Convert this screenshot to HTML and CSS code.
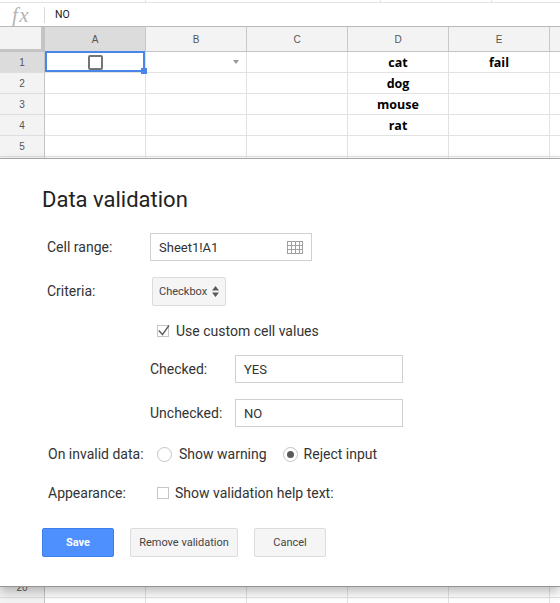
FILE: index.html
```html
<!DOCTYPE html>
<html lang="en">
<head>
<meta charset="utf-8">
<title>Data validation</title>
<link rel="stylesheet" href="styles.css">
</head>
<body>
<div class="app">
  <div class="toolbar-edge">
    <span class="tb-seg tb-seg-1"></span>
    <span class="tb-seg tb-seg-2"></span>
    <span class="tb-seg tb-seg-3"></span>
  </div>
  <div class="formula-bar">
    <span class="fx">fx</span>
    <span class="fx-sep"></span>
    <span class="fx-value">NO</span>
  </div>
  <div class="sheet">
    <div class="row row-head">
      <div class="hcell corner"></div>
      <div class="hcell sel">A</div>
      <div class="hcell">B</div>
      <div class="hcell">C</div>
      <div class="hcell">D</div>
      <div class="hcell">E</div>
      <div class="hcell"></div>
    </div>
    <div class="row">
      <div class="rh sel">1</div>
      <div class="c a1"><span class="cell-checkbox"></span><span class="sel-box"></span><span class="sel-handle"></span></div>
      <div class="c b1"><span class="dd"></span></div>
      <div class="c"></div>
      <div class="c bold">cat</div>
      <div class="c bold">fail</div>
      <div class="c"></div>
    </div>
    <div class="row"><div class="rh">2</div><div class="c"></div><div class="c"></div><div class="c"></div><div class="c bold">dog</div><div class="c"></div><div class="c"></div></div>
    <div class="row"><div class="rh">3</div><div class="c"></div><div class="c"></div><div class="c"></div><div class="c bold">mouse</div><div class="c"></div><div class="c"></div></div>
    <div class="row"><div class="rh">4</div><div class="c"></div><div class="c"></div><div class="c"></div><div class="c bold">rat</div><div class="c"></div><div class="c"></div></div>
    <div class="row"><div class="rh">5</div><div class="c"></div><div class="c"></div><div class="c"></div><div class="c"></div><div class="c"></div><div class="c"></div></div>
    <div class="row row-tall"><div class="rh">6</div><div class="c"></div><div class="c"></div><div class="c"></div><div class="c"></div><div class="c"></div><div class="c"></div></div>
    <div class="row row-tall"><div class="rh">7</div><div class="c"></div><div class="c"></div><div class="c"></div><div class="c"></div><div class="c"></div><div class="c"></div></div>
    <div class="row row-tall"><div class="rh">8</div><div class="c"></div><div class="c"></div><div class="c"></div><div class="c"></div><div class="c"></div><div class="c"></div></div>
    <div class="row row-tall"><div class="rh">9</div><div class="c"></div><div class="c"></div><div class="c"></div><div class="c"></div><div class="c"></div><div class="c"></div></div>
    <div class="row row-tall"><div class="rh">10</div><div class="c"></div><div class="c"></div><div class="c"></div><div class="c"></div><div class="c"></div><div class="c"></div></div>
    <div class="row row-tall"><div class="rh">11</div><div class="c"></div><div class="c"></div><div class="c"></div><div class="c"></div><div class="c"></div><div class="c"></div></div>
    <div class="row row-tall"><div class="rh">12</div><div class="c"></div><div class="c"></div><div class="c"></div><div class="c"></div><div class="c"></div><div class="c"></div></div>
    <div class="row row-tall"><div class="rh">13</div><div class="c"></div><div class="c"></div><div class="c"></div><div class="c"></div><div class="c"></div><div class="c"></div></div>
    <div class="row row-tall"><div class="rh">14</div><div class="c"></div><div class="c"></div><div class="c"></div><div class="c"></div><div class="c"></div><div class="c"></div></div>
    <div class="row row-tall"><div class="rh">15</div><div class="c"></div><div class="c"></div><div class="c"></div><div class="c"></div><div class="c"></div><div class="c"></div></div>
    <div class="row row-tall"><div class="rh">16</div><div class="c"></div><div class="c"></div><div class="c"></div><div class="c"></div><div class="c"></div><div class="c"></div></div>
    <div class="row row-tall"><div class="rh">17</div><div class="c"></div><div class="c"></div><div class="c"></div><div class="c"></div><div class="c"></div><div class="c"></div></div>
    <div class="row row-tall"><div class="rh">18</div><div class="c"></div><div class="c"></div><div class="c"></div><div class="c"></div><div class="c"></div><div class="c"></div></div>
    <div class="row row-tall"><div class="rh">19</div><div class="c"></div><div class="c"></div><div class="c"></div><div class="c"></div><div class="c"></div><div class="c"></div></div>
    <div class="row"><div class="rh">20</div><div class="c"></div><div class="c"></div><div class="c"></div><div class="c"></div><div class="c"></div><div class="c"></div></div>
    <div class="row"><div class="rh"></div><div class="c"></div><div class="c"></div><div class="c"></div><div class="c"></div><div class="c"></div><div class="c"></div></div>
  </div>

  <div class="dialog">
    <h1 class="dlg-title">Data validation</h1>
    <div class="form">
      <div class="frow r-range">
        <span class="flabel">Cell range:</span>
        <div class="range-input">
          <span>Sheet1!A1</span>
          <svg class="grid-icon" width="16" height="13" viewBox="0 0 16 13" aria-hidden="true">
            <rect x="0.5" y="0.5" width="15" height="12" fill="none" stroke="#a0a0a0"/>
            <path d="M4.5 0.5V12.5M8.5 0.5V12.5M12.5 0.5V12.5M0.5 4.5H15.5M0.5 8.5H15.5" fill="none" stroke="#a0a0a0"/>
          </svg>
        </div>
      </div>
      <div class="frow r-criteria">
        <span class="flabel">Criteria:</span>
        <div class="select">
          <span>Checkbox</span>
          <svg width="7" height="11" viewBox="0 0 7 11" aria-hidden="true">
            <path d="M0 4.5L3.5 0L7 4.5Z M0 6.5L3.5 11L7 6.5Z" fill="#5a5a5a"/>
          </svg>
        </div>
      </div>
      <div class="frow r-custom">
        <span class="flabel"></span>
        <span class="opt opt-check">
          <svg class="checkbox-svg" width="13" height="13" viewBox="0 0 13 13" aria-hidden="true">
            <rect x="0.5" y="0.5" width="11" height="11" fill="#fff" stroke="#c6c6c6"/>
            <path d="M1.8 5.6L5.5 9.6L12 0.4" fill="none" stroke="#5f5f5f" stroke-width="1.5"/>
          </svg>
          <span class="opt-text">Use custom cell values</span>
        </span>
      </div>
      <div class="frow r-checked">
        <span class="flabel"></span>
        <span class="sublabel">Checked:</span>
        <div class="text-input">YES</div>
      </div>
      <div class="frow r-unchecked">
        <span class="flabel"></span>
        <span class="sublabel">Unchecked:</span>
        <div class="text-input">NO</div>
      </div>
      <div class="frow r-invalid">
        <span class="flabel flabel-shift">On invalid data:</span>
        <span class="opt opt-radio">
          <span class="radio"></span>
          <span class="opt-text opt-text-radio">Show warning</span>
        </span>
        <span class="opt opt-radio opt-radio-2">
          <span class="radio checked"><span class="radio-dot"></span></span>
          <span class="opt-text opt-text-radio2">Reject input</span>
        </span>
      </div>
      <div class="frow r-appear">
        <span class="flabel flabel-shift">Appearance:</span>
        <span class="opt opt-check">
          <span class="checkbox-empty"></span>
          <span class="opt-text">Show validation help text:</span>
        </span>
      </div>
    </div>
    <div class="buttons">
      <div class="btn btn-save">Save</div>
      <div class="btn btn-remove">Remove validation</div>
      <div class="btn btn-cancel">Cancel</div>
    </div>
  </div>
</div>
</body>
</html>
```

FILE: styles.css
```css
* { box-sizing: border-box; }

html, body {
  margin: 0;
  padding: 0;
}

body {
  width: 560px;
  height: 603px;
  overflow: hidden;
  background: #fff;
  font-family: Roboto, "Liberation Sans", Arial, sans-serif;
}

.app {
  position: relative;
  width: 560px;
  height: 603px;
  overflow: hidden;
}

/* remnant of toolbar above the formula bar */
.toolbar-edge {
  display: flex;
  height: 3px;
  border-bottom: 1px solid #e3e3e3;
}
.tb-seg { height: 2px; border-right: 1px solid #e3e3e3; flex-shrink: 0; }
.tb-seg-1 { width: 146px; }
.tb-seg-2 { width: 235px; }
.tb-seg-3 { width: 111px; }

/* formula bar */
.formula-bar {
  display: flex;
  align-items: center;
  height: 24px;
  border-bottom: 1px solid #b9b9b9;
}
.fx {
  width: 44px;
  padding-left: 12px;
  font-family: "Liberation Serif", "DejaVu Serif", serif;
  font-style: italic;
  font-size: 21px;
  letter-spacing: 1.5px;
  line-height: 20px;
  color: #b5b5b5;
}
.fx-sep {
  width: 1px;
  height: 16px;
  background: #d9d9d9;
}
.fx-value {
  margin-left: 10px;
  font-family: Roboto, "Liberation Sans", Arial, sans-serif;
  font-size: 10.5px;
  color: #222;
}

/* sheet grid */
.sheet {
  width: 560px;
}
.row {
  display: flex;
  height: 21px;
}
.row-head { height: 25px; }
.row-tall { height: 30px; }

.hcell, .rh, .c {
  flex-shrink: 0;
  display: flex;
  align-items: center;
  justify-content: center;
}

.hcell {
  width: 101px;
  background: #f3f3f3;
  border-right: 1px solid #c8c8c8;
  border-bottom: 1px solid #c4c4c4;
  font-family: "Liberation Sans", Arial, sans-serif;
  font-size: 10px;
  color: #555;
}
.hcell.corner {
  width: 45px;
  border-right: 4px solid #c4c4c4;
  border-bottom: 3px solid #c4c4c4;
}
.hcell.sel, .rh.sel { background: #dcdcdc; }

.rh {
  width: 45px;
  background: #f3f3f3;
  border-right: 1px solid #c4c4c4;
  border-bottom: 1px solid #dedede;
  font-family: "Liberation Sans", Arial, sans-serif;
  font-size: 10px;
  color: #555;
}

.c {
  width: 101px;
  border-right: 1px solid #e2e2e2;
  border-bottom: 1px solid #e2e2e2;
  font-family: "Open Sans", "Noto Sans", sans-serif;
  font-size: 12.5px;
  color: #000;
}
.c.bold { font-weight: 700; }

.c.a1 { position: relative; }
.cell-checkbox {
  width: 15px;
  height: 15px;
  border: 2px solid #747474;
  border-radius: 2px;
}
.sel-box {
  position: absolute;
  top: -1px;
  left: 0;
  right: 0;
  bottom: 0;
  border: 2px solid #4a86e8;
}
.sel-handle {
  position: absolute;
  right: -2px;
  bottom: -2px;
  width: 6px;
  height: 6px;
  background: #4a86e8;
}

.c.b1 {
  justify-content: flex-end;
  padding-right: 7px;
}
.dd {
  width: 0;
  height: 0;
  border-left: 3.5px solid transparent;
  border-right: 3.5px solid transparent;
  border-top: 4px solid #9a9a9a;
}

/* dialog */
.dialog {
  position: absolute;
  top: 158px;
  left: 0;
  right: 0;
  background: #fff;
  border-top: 1px solid #a6a6a6;
  border-bottom: 1px solid #949494;
  box-shadow: 0 5px 10px rgba(0, 0, 0, 0.26);
  padding: 28px 0 29px 42px;
  color: #333;
}
.dlg-title {
  margin: 0;
  font-size: 22px;
  font-weight: 400;
  line-height: 26px;
  color: #222;
}
.form {
  padding-left: 5px;
}
.frow {
  display: flex;
  align-items: center;
  font-size: 14px;
  line-height: 17px;
  color: #333;
}
.flabel {
  width: 103px;
  flex-shrink: 0;
}
.flabel-shift { padding-left: 1px; }

.r-range { margin-top: 20px; height: 28px; }
.r-criteria { margin-top: 16px; height: 29px; }
.r-custom { margin-top: 15px; height: 20px; }
.r-checked { margin-top: 14px; height: 28px; }
.r-unchecked { margin-top: 16px; height: 28px; }
.r-invalid { margin-top: 17px; height: 20px; }
.r-appear { margin-top: 19px; height: 20px; }

.range-input {
  width: 162px;
  height: 28px;
  border: 1px solid #d0d0d0;
  display: flex;
  align-items: center;
  justify-content: space-between;
  padding: 0 8px 0 8px;
  font-size: 13px;
  color: #333;
}
.grid-icon { display: block; }

.select {
  margin-left: 2px;
  width: 74px;
  height: 29px;
  border: 1px solid #dcdcdc;
  border-radius: 2px;
  background: #f5f5f5;
  display: flex;
  align-items: center;
  justify-content: space-between;
  padding: 0 6px;
  font-size: 11px;
  color: #444;
}
.select svg { display: block; }

.opt {
  display: flex;
  align-items: center;
}
.opt-check { margin-left: 7px; }
.checkbox-svg { display: block; overflow: visible; }
.checkbox-empty {
  width: 12px;
  height: 12px;
  border: 1px solid #c6c6c6;
  background: #fff;
}
.opt-text { margin-left: 6px; }

.sublabel {
  width: 85px;
  flex-shrink: 0;
}
.text-input {
  width: 168px;
  height: 28px;
  border: 1px solid #d0d0d0;
  padding-left: 8px;
  display: flex;
  align-items: center;
  font-size: 13px;
  color: #333;
}

.opt-radio { margin-left: 7px; }
.opt-radio-2 { margin-left: 16px; }
.radio {
  width: 15px;
  height: 15px;
  border: 1px solid #c4c4c4;
  border-radius: 50%;
  background: #fff;
  display: flex;
  align-items: center;
  justify-content: center;
}
.radio-dot {
  width: 7px;
  height: 7px;
  border-radius: 50%;
  background: #5a5a5a;
}
.opt-text-radio { margin-left: 7px; }
.opt-text-radio2 { margin-left: 6px; }

.buttons {
  margin-top: 25px;
  display: flex;
  gap: 16px;
  height: 29px;
}
.btn {
  height: 29px;
  border: 1px solid #dcdcdc;
  border-radius: 2px;
  background: #f5f5f5;
  color: #444;
  font-size: 11px;
  display: flex;
  align-items: center;
  justify-content: center;
}
.btn-save {
  width: 72px;
  background: #4d90fe;
  border-color: #3b7fed;
  color: #fff;
  font-weight: 700;
}
.btn-remove { width: 108px; }
.btn-cancel { width: 72px; }
```
